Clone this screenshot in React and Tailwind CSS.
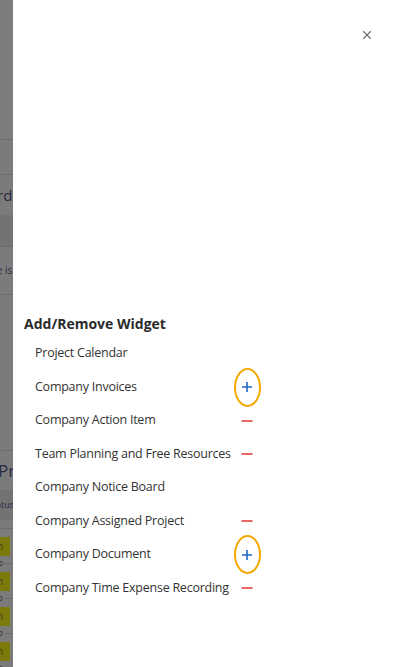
import React from 'react';
import { X } from 'lucide-react';

const widgets = [
  { name: 'Project Calendar', state: null },
  { name: 'Company Invoices', state: 'add' },
  { name: 'Company Action Item', state: 'remove' },
  { name: 'Team Planning and Free Resources', state: 'remove' },
  { name: 'Company Notice Board', state: null },
  { name: 'Company Assigned Project', state: 'remove' },
  { name: 'Company Document', state: 'add' },
  { name: 'Company Time Expense Recording', state: 'remove' },
];

const BackdropStrip = () => (
  <div className="w-[13px] h-full overflow-hidden bg-[#7b7b7b] flex flex-col text-[13px] text-[#2a2a44]">
    <div className="h-[140px] shrink-0 bg-[#7c7c7c] border-b border-[#6c6c6c]" />
    <div className="h-[35px] shrink-0 border-b border-[#6c6c6c]" />
    <div className="h-[40px] shrink-0 flex items-center text-[15px] -ml-[3px]">rd</div>
    <div className="h-[32px] shrink-0 bg-[#737373] border-b border-[#6c6c6c]" />
    <div className="h-[48px] shrink-0 flex items-center text-[10px] -ml-[8px] border-b border-[#6c6c6c]">se is</div>
    <div className="h-[155px] shrink-0" />
    <div className="h-[40px] shrink-0 flex items-center text-[17px] -ml-[2px] border-t border-[#6c6c6c]">Pr</div>
    <div className="h-[30px] shrink-0 bg-[#737373] flex items-center text-[9px] -ml-[4px]">atus</div>
    <div className="h-[8px] shrink-0" />
    {[0, 1, 2, 3].map((i) => (
      <div key={i} className="h-[35px] shrink-0 flex items-center border-t border-[#6c6c6c]">
        <div className="h-[19px] w-full bg-[#7c7a0a] text-[10px] leading-[19px] -ml-[3px] text-[#3a3a20]">n P</div>
      </div>
    ))}
  </div>
);

const App = () => {
  return (
    <div className="w-[400px] h-[667px] flex overflow-hidden bg-white" style={{ fontFamily: '"Open Sans", "Noto Sans", sans-serif' }}>
      <BackdropStrip />
      <div className="flex-1 h-full bg-white flex flex-col">
        <div className="flex justify-end pt-[28px] pr-[26px]">
          <X size={14} strokeWidth={2} className="text-[#6f6f6f]" />
        </div>
        <div className="pt-[272px] pl-[11px]">
          <h2 className="text-[14px] font-bold text-[#2b2b2b] leading-[20px] mb-[3px]">Add/Remove Widget</h2>
          <ul className="pl-[11px]">
            {widgets.map((w) => (
              <li key={w.name} className="h-[33.5px] flex items-center text-[12.5px] tracking-[-0.25px] text-[#333]">
                <span className="w-[206px] whitespace-nowrap">{w.name}</span>
                {w.state === 'add' && (
                  <span className="relative flex items-center justify-center w-[12px] h-[12px]">
                    <span className="absolute w-[27px] h-[39px] rounded-[50%] border-2 border-[#f5a800]" />
                    <svg width="12" height="12" viewBox="0 0 12 12" className="text-[#1f66c9]">
                      <path d="M6 1v10M1 6h10" stroke="currentColor" strokeWidth="1.6" />
                    </svg>
                  </span>
                )}
                {w.state === 'remove' && (
                  <svg width="12" height="12" viewBox="0 0 12 12" className="text-[#e0332f]">
                    <path d="M0.5 6h11" stroke="currentColor" strokeWidth="1.5" />
                  </svg>
                )}
              </li>
            ))}
          </ul>
        </div>
      </div>
    </div>
  );
};

export default App;
